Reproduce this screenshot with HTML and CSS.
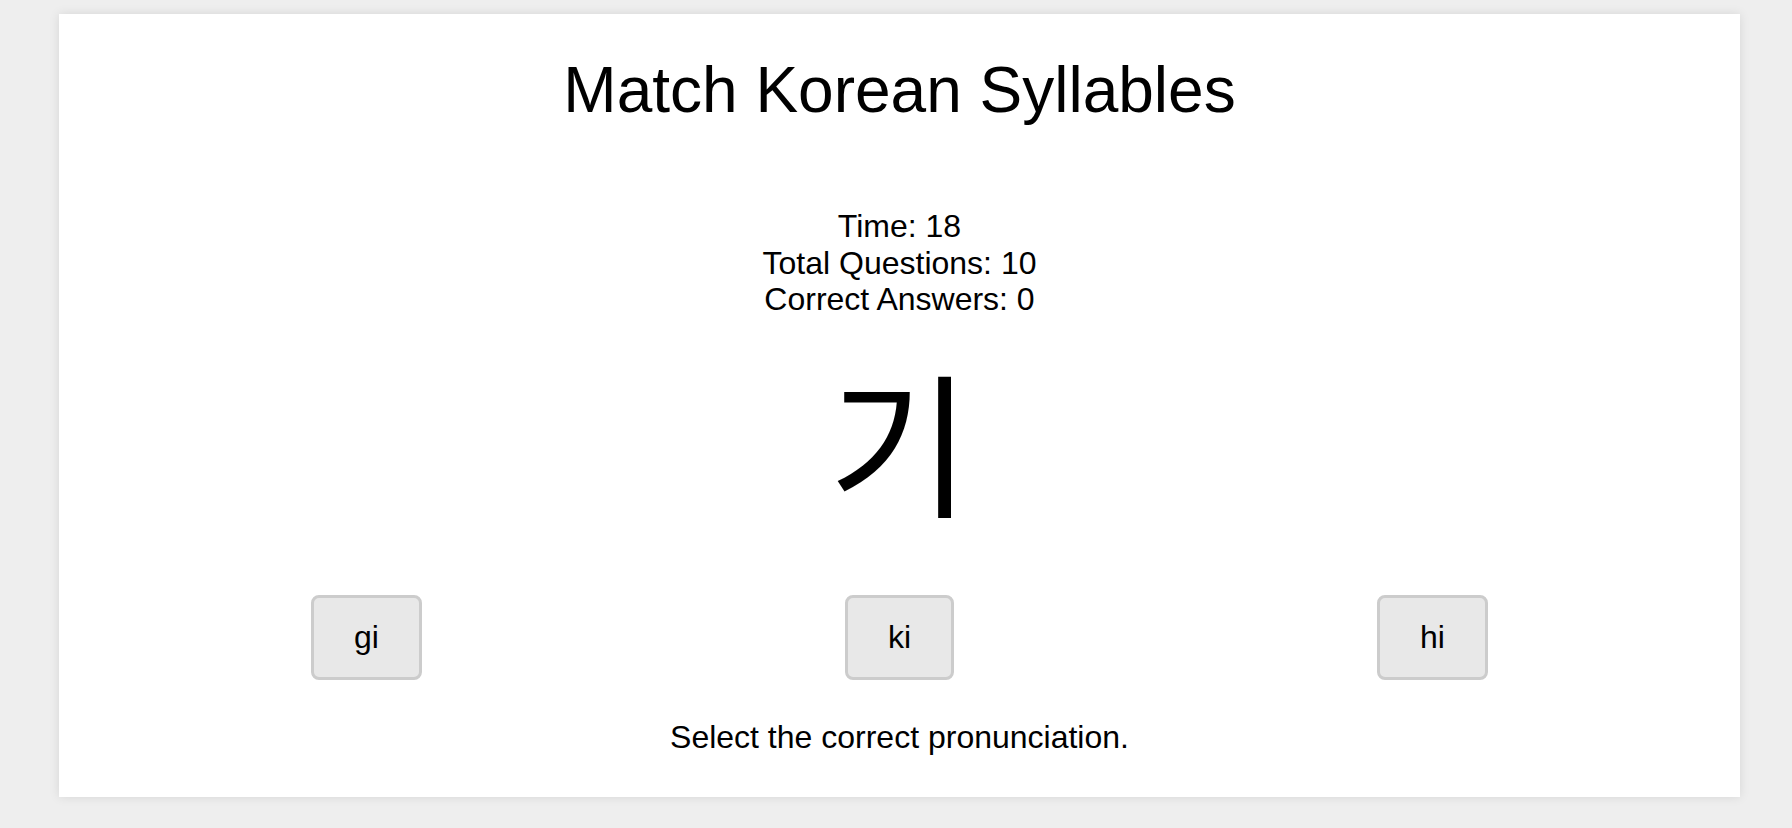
FILE: index.html
```html
<!DOCTYPE html>
<html lang="en">
<head>
<meta charset="utf-8">
<title>Match Korean Syllables</title>
<link rel="stylesheet" href="styles.css">
</head>
<body>
<main class="card">
  <h1 class="title">Match Korean Syllables</h1>
  <div class="stats">
    <div class="stat">Time: 18</div>
    <div class="stat">Total Questions: 10</div>
    <div class="stat">Correct Answers: 0</div>
  </div>
  <div class="syllable" lang="ko">기</div>
  <div class="options">
    <div class="option-cell"><button class="option">gi</button></div>
    <div class="option-cell"><button class="option">ki</button></div>
    <div class="option-cell"><button class="option">hi</button></div>
  </div>
  <p class="hint">Select the correct pronunciation.</p>
</main>
</body>
</html>
```
FILE: styles.css
```css
html, body {
  margin: 0;
  padding: 0;
}

body {
  background: #eeeeee;
  font-family: "Liberation Sans", Arial, Helvetica, sans-serif;
  color: #000;
  padding: 14px 52px 31px 59px;
}

.card {
  box-sizing: border-box;
  background: #ffffff;
  box-shadow: 0 0 10px rgba(0, 0, 0, 0.1);
  padding: 40px 41px 41px 41px;
  display: flex;
  flex-direction: column;
  align-items: stretch;
  text-align: center;
}

.title {
  margin: 0;
  font-size: 64px;
  font-weight: normal;
  line-height: 73px;
}

.stats {
  margin-top: 81px;
  font-size: 32px;
  line-height: 36.5px;
}

.syllable {
  margin-top: 20px;
  font-family: "Noto Sans CJK KR", "Noto Sans", sans-serif;
  font-size: 155px;
  line-height: 200px;
  height: 200px;
}

.options {
  margin-top: 57px;
  display: grid;
  grid-template-columns: 1fr 1fr 1fr;
}

.option-cell {
  display: flex;
  justify-content: center;
}

.option {
  font-family: "Liberation Sans", Arial, Helvetica, sans-serif;
  font-size: 32px;
  line-height: 37px;
  padding: 21px 40px;
  margin: 0;
  background: #e8e8e8;
  border: 3px solid #cccccc;
  border-radius: 8px;
  color: #000;
  cursor: pointer;
}

.hint {
  margin: 39px 0 0;
  font-size: 32px;
  line-height: 37px;
}
```
